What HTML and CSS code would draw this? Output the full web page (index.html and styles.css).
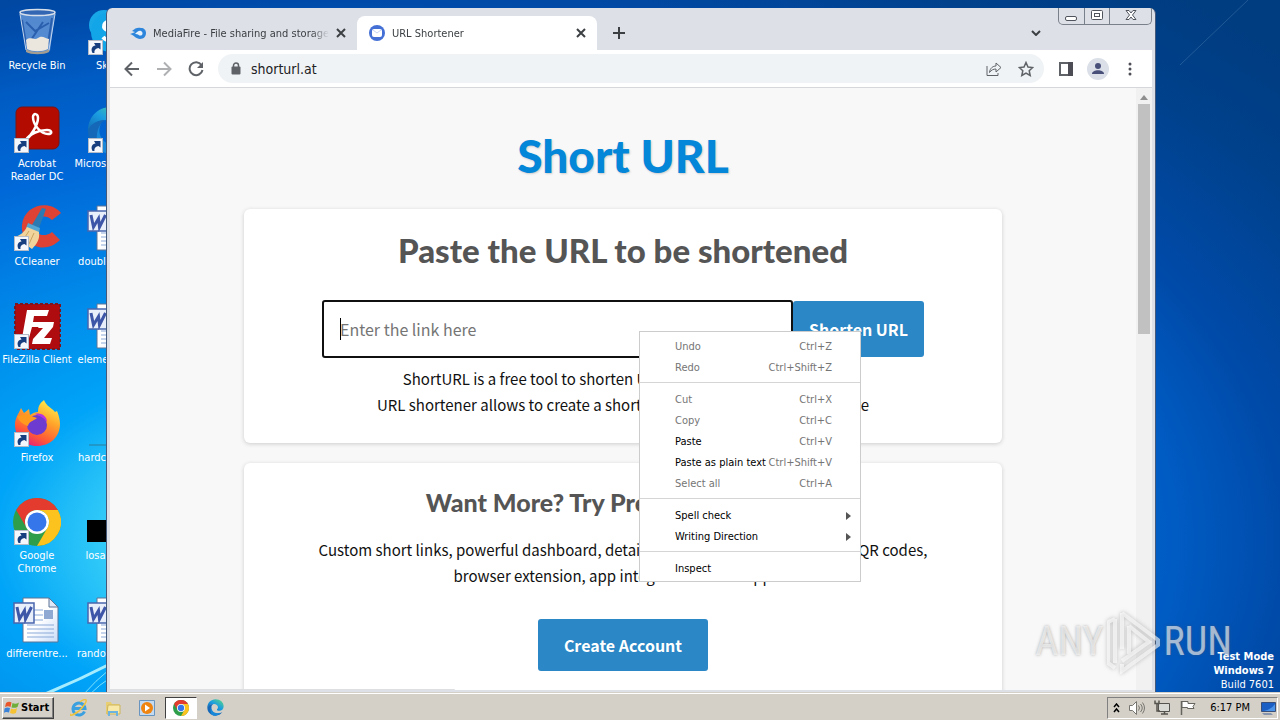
FILE: index.html
```html
<!DOCTYPE html>
<html lang="en">
<head>
  <meta charset="utf-8">
  <title>URL Shortener</title>
  <link rel="stylesheet" href="styles.css">
</head>
<body>
  <!-- shared icon shapes -->
  <svg class="defs" width="0" height="0" aria-hidden="true">
    <defs>
      <linearGradient id="paper" x1="0" y1="0" x2="1" y2="1">
        <stop offset="0.5" stop-color="#fff"/>
        <stop offset="1" stop-color="#c9dcf8"/>
      </linearGradient>
      <linearGradient id="fox" x1="0.8" y1="0" x2="0.3" y2="1">
        <stop offset="0" stop-color="#fff44f"/>
        <stop offset="0.4" stop-color="#ffa42a"/>
        <stop offset="0.75" stop-color="#ff5a36"/>
        <stop offset="1" stop-color="#e3207a"/>
      </linearGradient>
      <linearGradient id="edge" x1="0" y1="1" x2="1" y2="0">
        <stop offset="0" stop-color="#0c59a4"/>
        <stop offset="0.5" stop-color="#1b9de2"/>
        <stop offset="1" stop-color="#5fdc7b"/>
      </linearGradient>
    </defs>
    <symbol id="shortcut" viewBox="0 0 15 15">
      <rect x="0.5" y="0.5" width="14" height="14" fill="#f4f7fb" stroke="#b5bcc8"/>
      <path d="M4.500 13C2.500 9 4 6 7.500 5.500L6 3h6.500v6.500L10.500 8C8 8.500 6 10 6.500 13z" fill="#173f80"/>
    </symbol>
    <symbol id="word" viewBox="0 0 48 48">
      <path d="M10 2h26l9 9v35H10z" fill="url(#paper)" stroke="#5c7496"/>
      <path d="M36 2v9h9z" fill="#dfe8f6" stroke="#5c7496"/>
      <path d="M14 14h16M14 19h16M14 24h16M14 29h27M14 33h27M14 37h27M14 41h27" stroke="#8aa9d8"/>
      <rect x="31" y="14" width="9" height="9" fill="#8fa9d2"/>
      <rect x="1" y="7" width="20" height="20" fill="#e8eefa" stroke="#4966ad" stroke-width="1.500"/>
      <path d="M4 11l2.500 12 5-8.500 1 8.500L18.500 11" fill="none" stroke="#3e56a8" stroke-width="3"/>
    </symbol>
    <symbol id="chrome" viewBox="0 0 48 48">
      <circle cx="24" cy="24" r="24" fill="#2f9e4b"/>
      <path d="M3.200 12A24 24 0 0 1 44.800 12H24A12 12 0 0 0 13.600 30z" fill="#e33b2e"/>
      <path d="M44.800 12A24 24 0 0 1 24 48L34.400 30A12 12 0 0 0 24 12z" fill="#fcc31e"/>
      <circle cx="24" cy="24" r="12" fill="#fff"/>
      <circle cx="24" cy="24" r="9.500" fill="#3576ea"/>
    </symbol>
    <symbol id="edge-logo" viewBox="0 0 48 48">
      <path d="M24 1C38 1 47 10 47 21c0 8-6 12-12 12-4 0-7-1-7-3s3-3 3-7c0-5-5-9-11-9C10 14 2 20 1 27 0 11 11 1 24 1z" fill="url(#edge)"/>
      <path d="M1 25c2-7 9-11 17-11-5 3-7 8-6 14 2 9 11 14 20 13 4 0 8-2 11-4-4 7-11 10-19 10C11 47 1 38 1 25z" fill="#1568b8"/>
      <path d="M18 14c-6 4-7 11-4 17 4 8 14 11 24 8-4 6-12 9-19 8C8 45 6 22 18 14z" fill="#1a88d8"/>
    </symbol>
  </svg>

  <main class="desktop">
    <svg class="streaks" viewBox="0 0 1280 692" preserveAspectRatio="none" aria-hidden="true">
      <path d="M40 696Q75 682 110 664" fill="none" stroke="#a5ecff" stroke-width="3"/>
      <path d="M82 696Q96 680 110 669M88 696Q100 684 110 678" fill="none" stroke="#7fe0fd" stroke-width="1"/>
      <path d="M1180 65L1248 0" stroke="#3f77ab" stroke-opacity="0.500" stroke-width="1"/>
    </svg>

    <nav class="icons" aria-label="Desktop">
      <a class="icon" href="#">
        <svg width="48" height="48" viewBox="0 0 48 48">
          <path d="M7 4h35l-5 39c-4 3-19 3-23 0z" fill="#6f9fdc" fill-opacity="0.750"/>
          <path d="M9 12l4 24M39 10l-4 26M13 14l9 9 14-8M18 32l12-18" stroke="#2a5fae" stroke-width="2" fill="none"/>
          <path d="M13 32c5-4 8 1 12-2s7 0 11 1l-1 10c-6 3-15 3-21 0z" fill="#ece7de"/>
          <ellipse cx="24.500" cy="4.500" rx="17.500" ry="3" fill="#3467b3" stroke="#d7dfea" stroke-width="1.500"/>
          <path d="M13 41c5 4 18 4 23 0v3c-5 3-18 3-23 0z" fill="#a49e92"/>
          <path d="M7 6l6 36M42 6l-6 36" stroke="#c4d6ee" stroke-width="1"/>
        </svg>
        <span>Recycle Bin</span>
      </a>
      <a class="icon" href="#">
        <svg width="48" height="48" viewBox="0 0 48 48">
          <rect x="3" y="1" width="43" height="42" rx="6" fill="#b30b00" stroke="#7c1410"/>
          <path d="M12 35c6-5 13-16 13-23 0-5-5-5-5-1 0 8 8 17 15 17 5 0 4-4-1-4-7 0-17 3-22 11z" fill="none" stroke="#fff" stroke-width="2.500"/>
          <use href="#shortcut" x="1" y="32" width="15" height="15"/>
        </svg>
        <span>Acrobat Reader DC</span>
      </a>
      <a class="icon" href="#">
        <svg width="48" height="48" viewBox="0 0 48 48">
          <path d="M48 9C36-5 11 1 9 21c-2 19 22 31 38 15L39 28c-7 6-18 3-18-6s11-13 18-6z" fill="#dd4234"/>
          <path d="M29 4l4 1-7 19-7-3z" fill="#2b7bb2"/>
          <path d="M15 19l12 5-1 5-13-5z" fill="#54a7d2"/>
          <path d="M14 23l12 5c1 7-2 12-7 17L2 33c6-2 9-5 12-10z" fill="#f1d49b"/>
          <path d="M16 27l-6 9M21 29l-5 11" stroke="#caa35f"/>
          <use href="#shortcut" x="1" y="32" width="15" height="15"/>
        </svg>
        <span>CCleaner</span>
      </a>
      <a class="icon" href="#">
        <svg width="48" height="48" viewBox="0 0 48 48">
          <rect x="2" y="2" width="45" height="45" fill="#af0c10" stroke="#7a1620" stroke-width="2" stroke-dasharray="3 2"/>
          <path d="M14 8h22l-2 6H21l-1 6h10l-1 5H19l-3 11H9z" fill="#fff"/>
          <path d="M29 20h12l-1 5-9 11h8l-2 6H19l1-5 10-11h-5z" fill="#fff"/>
          <use href="#shortcut" x="1" y="32" width="15" height="15"/>
        </svg>
        <span>FileZilla Client</span>
      </a>
      <a class="icon" href="#">
        <svg width="48" height="48" viewBox="0 0 48 48">
          <path d="M24 46C11 46 2 37 2 25c0-7 3-10 6-17l3 5 5-4 1 6c3-2 5-3 8-3 0-6 2-9 6-12 2 6 8 8 11 12l2-1c2 5 3 9 3 13 0 13-10 22-23 22z" fill="url(#fox)"/>
          <circle cx="24" cy="25" r="10" fill="#6d3bd0"/>
          <path d="M4 16c7-1 9-3 14 0l6 2c-3 3-8 3-9 8-5-2-9-4-11-10z" fill="#ff9a1f"/>
          <path d="M22 14c7-2 12 3 12 8-3-4-7-6-12-8z" fill="#b833e1"/>
          <use href="#shortcut" x="1" y="32" width="15" height="15"/>
        </svg>
        <span>Firefox</span>
      </a>
      <a class="icon" href="#">
        <svg width="48" height="48" viewBox="0 0 48 48">
          <use href="#chrome" width="48" height="48"/>
          <use href="#shortcut" x="1" y="32" width="15" height="15"/>
        </svg>
        <span>Google Chrome</span>
      </a>
      <a class="icon" href="#">
        <svg width="48" height="48"><use href="#word"/></svg>
        <span>differentre...</span>
      </a>

      <a class="icon" href="#">
        <svg width="48" height="48" viewBox="0 0 48 48">
          <circle cx="17" cy="17" r="15" fill="#18a8e8"/>
          <circle cx="24" cy="24" r="20" fill="#12a5e8"/>
          <path d="M31 16c-5-5-15-3-14 3 1 5 13 4 14 9 0 6-11 6-15 1" fill="none" stroke="#fff" stroke-width="4"/>
          <use href="#shortcut" x="1" y="32" width="15" height="15"/>
        </svg>
        <span>Skype</span>
      </a>
      <a class="icon" href="#">
        <svg width="48" height="48" viewBox="0 0 48 48">
          <use href="#edge-logo" width="48" height="48"/>
          <use href="#shortcut" x="1" y="32" width="15" height="15"/>
        </svg>
        <span>Microsoft Edge</span>
      </a>
      <a class="icon" href="#">
        <svg width="48" height="48"><use href="#word"/></svg>
        <span>doublelink.rtf</span>
      </a>
      <a class="icon" href="#">
        <svg width="48" height="48"><use href="#word"/></svg>
        <span>elements1.rtf</span>
      </a>
      <a class="icon" href="#">
        <svg width="48" height="48" viewBox="0 0 48 48"><path d="M2 45h44" stroke="#2b7d9b"/></svg>
        <span>hardcore.png</span>
      </a>
      <a class="icon" href="#">
        <svg width="48" height="48" viewBox="0 0 48 48"><path d="M0 22h48v22H0z"/></svg>
        <span>losalto.jpg</span>
      </a>
      <a class="icon" href="#">
        <svg width="48" height="48"><use href="#word"/></svg>
        <span>randomset.rtf</span>
      </a>
    </nav>

    <p class="build"><b>Test Mode</b><b>Windows 7</b><span>Build 7601</span></p>

    <section class="window" aria-label="Chrome">
      <div class="tabs">
        <div class="tab">
          <svg width="17" height="16" viewBox="0 0 17 16">
            <path d="M1 9c2-1 4-1 5-2l-3-1c3-3 6-4 9-3 3 0 5 2 5 5s-2 6-6 6-6-4-10-5z" fill="#2e86dc"/>
            <path d="M6 9c2-2 4-4 6-3s2 4 0 4.500S9 8.500 6 9z" fill="#e6f1fb"/>
          </svg>
          <span class="tab-title">MediaFire - File sharing and storage</span>
          <button class="close" aria-label="Close tab">
            <svg width="10" height="10" viewBox="0 0 10 10"><path d="M1 1l8 8M9 1l-8 8"/></svg>
          </button>
        </div>
        <div class="tab active">
          <svg width="16" height="16" viewBox="0 0 16 16">
            <circle cx="8" cy="8" r="8" fill="#4470d6"/>
            <rect x="3" y="4" width="10" height="8" rx="2" fill="#fff"/>
            <path d="M4 5l4 3 4-3" fill="none" stroke="#c5d4f4"/>
          </svg>
          <span class="tab-title">URL Shortener</span>
          <button class="close" aria-label="Close tab">
            <svg width="10" height="10" viewBox="0 0 10 10"><path d="M1 1l8 8M9 1l-8 8"/></svg>
          </button>
        </div>
        <button class="new-tab" aria-label="New tab">
          <svg width="12" height="12" viewBox="0 0 12 12"><path d="M6 0v12M0 6h12"/></svg>
        </button>
        <button class="tab-search" aria-label="Search tabs">
          <svg width="10" height="6" viewBox="0 0 10 6"><path d="M1 1l4 4 4-4"/></svg>
        </button>
      </div>
      <div class="controls">
        <button aria-label="Minimize"><svg width="13" height="12" viewBox="0 0 13 12"><rect x="0.500" y="7.500" width="11" height="4" rx="1.500"/></svg></button>
        <button aria-label="Restore"><svg width="13" height="12" viewBox="0 0 13 12"><rect x="0.500" y="1.500" width="11" height="9" rx="1"/><rect x="3.500" y="4.500" width="5" height="3"/></svg></button>
        <button class="wide" aria-label="Close"><svg width="12" height="12" viewBox="0 0 12 12"><path d="M1 1.500h3l2 2.500 2-2.500h3L7.500 6l3.500 4.500H8L6 8l-2 2.500H1L4.500 6z"/></svg></button>
      </div>

      <div class="toolbar">
        <button class="tool" aria-label="Back">
          <svg width="16" height="16" viewBox="0 0 16 16"><path d="M15 8H2M8 1.500L1.500 8 8 14.500"/></svg>
        </button>
        <button class="tool" aria-label="Forward" disabled>
          <svg width="16" height="16" viewBox="0 0 16 16"><path d="M1 8h13M8 1.500L14.500 8 8 14.500"/></svg>
        </button>
        <button class="tool" aria-label="Reload">
          <svg width="16" height="16" viewBox="0 0 16 16"><path d="M13.500 4A6.500 6.500 0 1 0 14.500 9"/><path d="M15 1v6H9z" fill="#5f6368" stroke="none"/></svg>
        </button>
        <div class="omnibox">
          <svg width="10" height="13" viewBox="0 0 10 13"><rect x="0.500" y="4.500" width="9" height="8" rx="1" fill="#5f6368"/><path d="M2.500 5V3.500a2.500 2.500 0 0 1 5 0V5" fill="none" stroke="#5f6368" stroke-width="1.500"/></svg>
          <input type="text" value="shorturl.at" aria-label="Address">
          <button class="tool" aria-label="Share">
            <svg class="thin" width="16" height="16" viewBox="0 0 16 16"><path d="M1 5v9.500h11V12M3.500 11.500C4 7 7 5 10 5V2l5 4.500-5 4.500V8C7.500 8 5 9 3.500 11.500z"/></svg>
          </button>
          <button class="tool" aria-label="Bookmark">
            <svg class="star" width="16" height="16" viewBox="0 0 16 16"><path d="M8 1.500l2 4.500 4.700.500-3.500 3.200 1 4.800L8 12l-4.200 2.500 1-4.800L1.300 6.500 6 6z"/></svg>
          </button>
        </div>
        <button class="tool" aria-label="Side panel">
          <svg width="14" height="14" viewBox="0 0 14 14"><path d="M1 1h12v12H1z"/><path d="M9 0h5v14H9z" fill="#4c4d55" stroke="none"/></svg>
        </button>
        <button class="tool" aria-label="Profile">
          <svg width="22" height="22" viewBox="0 0 22 22"><g stroke="none"><circle cx="11" cy="11" r="11" fill="#dadfe8"/><circle cx="11" cy="8" r="3" fill="#48507a"/><path d="M5 16c0-5 12-5 12 0z" fill="#48507a"/></g></svg>
        </button>
        <button class="tool" aria-label="Menu">
          <svg width="4" height="14" viewBox="0 0 4 14"><g fill="#4c4d55" stroke="none"><circle cx="2" cy="2" r="1.500"/><circle cx="2" cy="7" r="1.500"/><circle cx="2" cy="12" r="1.500"/></g></svg>
        </button>
      </div>

      <div class="view">
        <div class="page">
          <h1>Short URL</h1>
          <form class="card">
            <h2>Paste the URL to be shortened</h2>
            <div class="field">
              <span class="link-box"><input type="text" aria-label="Link" placeholder="Enter the link here"></span>
              <button class="primary" type="button">Shorten URL</button>
            </div>
            <p>ShortURL is a free tool to shorten URLs and generate short links<br>
              URL shortener allows to create a shortened link making it easy to share</p>
          </form>
          <section class="card premium">
            <h3>Want More? Try Premium Features!</h3>
            <p>Custom short links, powerful dashboard, detailed analytics, API, UTM builder, QR codes,
              browser extension, app integrations and support</p>
            <a class="primary" href="#">Create Account</a>
          </section>
        </div>
        <div class="scrollbar">
          <svg width="8" height="5" viewBox="0 0 8 5"><path d="M4 0l4 5H0z" fill="#8f8f8f"/></svg>
          <div class="thumb"></div>
        </div>
        <div class="status"></div>
      </div>
    </section>

    <div class="menu" role="menu">
      <button role="menuitem" disabled>Undo<kbd>Ctrl+Z</kbd></button>
      <button role="menuitem" disabled>Redo<kbd>Ctrl+Shift+Z</kbd></button>
      <hr>
      <button role="menuitem" disabled>Cut<kbd>Ctrl+X</kbd></button>
      <button role="menuitem" disabled>Copy<kbd>Ctrl+C</kbd></button>
      <button role="menuitem">Paste<kbd>Ctrl+V</kbd></button>
      <button role="menuitem">Paste as plain text<kbd>Ctrl+Shift+V</kbd></button>
      <button role="menuitem" disabled>Select all<kbd>Ctrl+A</kbd></button>
      <hr>
      <button class="sub" role="menuitem">Spell check<svg width="5" height="8" viewBox="0 0 5 8"><path d="M0 0l5 4-5 4z"/></svg></button>
      <button class="sub" role="menuitem">Writing Direction<svg width="5" height="8" viewBox="0 0 5 8"><path d="M0 0l5 4-5 4z"/></svg></button>
      <hr>
      <button role="menuitem">Inspect</button>
    </div>

    <div class="watermark">
      <span>ANY</span>
      <svg width="54" height="64" viewBox="0 0 54 64" fill="none">
        <path d="M8 9v44M1 11v42l7 5M8 9L1 12" />
        <path d="M15 3l36 27v5L15 61v-7M15 3v36M22 16l20 16-27 19M22 16v28"/>
      </svg>
      <span>RUN</span>
    </div>
  </main>

  <footer class="taskbar">
    <button class="start">
      <svg width="16" height="16" viewBox="0 0 16 16">
        <path d="M2 3c2-1.500 4-1.500 5.500-.500L6.500 7C5 6 3 6 1 7z" fill="#e8562a"/>
        <path d="M8.500 3c2 1 4 1 6.500-.500L13.500 7c-2 1-4 1-6 .500z" fill="#6fae3a"/>
        <path d="M.500 8.500c2-1.500 4-1 5.500-.500L5 12.500c-2-1-4-.500-5 .500z" fill="#3a83d8"/>
        <path d="M7 8.500c2 1 4 1 6-.500L12 13c-2 1-4 1-6 0z" fill="#f6c231"/>
      </svg>
      Start
    </button>
    <nav class="pinned" aria-label="Pinned">
      <a href="#" aria-label="Internet Explorer">
        <svg width="18" height="18" viewBox="0 0 18 18"><path d="M14.500 12.500A6 6 0 1 1 15 9.500H4" fill="none" stroke="#3aa0e0" stroke-width="3"/><path d="M1 15C-1 17 4 17 9 12s8-10 7-11-4 0-6 2" fill="none" stroke="#efc33c" stroke-width="1.500"/></svg>
      </a>
      <a href="#" aria-label="Explorer">
        <svg width="18" height="18" viewBox="0 0 18 18"><path d="M2 3h5l1 2h7v10H2z" fill="#e9cf74"/><path d="M4 6h12v9H3z" fill="#f8e9a8" stroke="#cdb35a"/><path d="M4 17v-5h10v5h-2v-3H6v3z" fill="#6db3e0"/></svg>
      </a>
      <a href="#" aria-label="Media Player">
        <svg width="18" height="18" viewBox="0 0 18 18"><path d="M1.500 1.500h15v15h-15z" fill="#c3daf0" stroke="#6795c0"/><circle cx="9" cy="9" r="6" fill="#f08410"/><path d="M7 5.500L12 9l-5 3.500z" fill="#fff"/></svg>
      </a>
      <a class="current" href="#" aria-label="Chrome">
        <svg width="16" height="16"><use href="#chrome"/></svg>
      </a>
      <a href="#" aria-label="Edge">
        <svg width="17" height="17"><use href="#edge-logo"/></svg>
      </a>
    </nav>
    <div class="tray">
      <svg width="7" height="10" viewBox="0 0 7 10" fill="none" stroke="#000" stroke-width="1.500"><path d="M1 4l2.500-3L6 4M1 9l2.500-3L6 9"/></svg>
      <svg width="16" height="14" viewBox="0 0 16 14" fill="none" stroke="#77756f"><path d="M.500 4.500h3l4-4v13l-4-4h-3z" fill="#fff"/><path d="M9.500 4.500q2 2.500 0 5M11.500 3q3.500 4 0 8M13.500 1.500q4 5.500 0 11"/></svg>
      <svg width="17" height="15" viewBox="0 0 17 15" fill="none" stroke="#55534e"><path d="M4.500 3.500h11v8h-11z" fill="#d9d9d5"/><path d="M7 14h7M10.500 12v2M1 .500v3h4v-3M3 4v7h3" stroke-width="1.500"/></svg>
      <svg width="17" height="15" viewBox="0 0 17 15" stroke="#66645f"><path d="M1.500 1v14" stroke-width="1.500"/><path d="M2 1.500h6v2h7l-2 3 1 2H7.500v-1H2z" fill="#fff"/></svg>
      <time>6:17 PM</time>
      <svg width="15" height="14" viewBox="0 0 15 14"><path d="M.500 1.500h14v9H.500z" fill="#1c5fc4" stroke="#3a4f78"/><path d="M1 10q8 0 13-7v7z" fill="#4b94e8"/><path d="M1 12h9l2 2H3z" fill="#8794ad"/></svg>
    </div>
  </footer>
</body>
</html>
```

FILE: styles.css
```css
* {
  box-sizing: border-box;
}

body {
  display: flex;
  flex-direction: column;
  height: 100vh;
  margin: 0;
  overflow: hidden;
  font-family: "DejaVu Sans Condensed", "DejaVu Sans", sans-serif;
  font-size: 11px;
  color: #000;
}

button,
input {
  padding: 0;
  border: none;
  background: none;
  font: inherit;
  color: inherit;
}

a {
  color: inherit;
  text-decoration: none;
}

svg {
  display: block;
  flex: none;
}

.defs {
  position: absolute;
}

/* desktop */
.desktop {
  position: relative;
  flex: 1;
  min-height: 0;
  overflow: hidden;
  background: radial-gradient(ellipse 1000px 560px at 320px 540px, #5be4ff 0%, #38cff8 20%, #00a4f8 33%, #0096f0 42%, #0068d8 70%, #005cc4 85%, #004aa8 97%, #00418c 115%, #003c80 130%);
}

.streaks {
  position: absolute;
  width: 100%;
  height: 100%;
}

.icons {
  position: relative;
  display: grid;
  grid-auto-flow: column;
  grid-template-rows: repeat(7, 98px);
  grid-auto-columns: 74px;
  padding-top: 8px;
}

.icon {
  display: flex;
  flex-direction: column;
  align-items: center;
  gap: 3px;
  line-height: 13px;
  text-align: center;
  color: #fff;
}

.icon span {
  max-width: 74px;
}

.build {
  position: absolute;
  right: 6px;
  bottom: 0;
  display: flex;
  flex-direction: column;
  margin: 0;
  line-height: 14px;
  text-align: right;
  color: #fff;
}

/* browser window */
.window {
  position: absolute;
  top: 8px;
  right: 124px;
  bottom: 0;
  left: 106px;
  display: flex;
  flex-direction: column;
  border: 1px solid #45597a;
  border-width: 0 1px;
  border-radius: 6px 6px 0 0;
  padding: 0 3px 2px;
  background: #dde0e7;
}

.tabs {
  display: flex;
  align-items: flex-end;
  height: 42px;
  padding-left: 7px;
}

.tab {
  display: flex;
  align-items: center;
  gap: 7px;
  width: 240px;
  height: 34px;
  padding: 0 11px 0 12px;
  color: #3c4043;
}

.tab.active {
  border-radius: 8px 8px 0 0;
  background: #fff;
}

.tab-title {
  flex: 1;
  overflow: hidden;
  white-space: nowrap;
  mask-image: linear-gradient(to right, #000 90%, transparent);
}

.close svg,
.new-tab svg,
.tab-search svg {
  fill: none;
  stroke: #3c4043;
  stroke-width: 2;
}

.new-tab {
  padding: 11px 16px;
}

.tab-search {
  margin-left: auto;
  padding: 14px 111px;
}

.controls {
  position: absolute;
  top: 0;
  right: 3px;
  display: flex;
  border: 1px solid #7a8089;
  border-top: none;
  border-radius: 0 0 5px 5px;
}

.controls button {
  display: flex;
  justify-content: center;
  width: 25px;
  height: 16px;
  padding-top: 1px;
}

.controls button + button {
  border-left: 1px solid #7a8089;
}

.controls .wide {
  width: 42px;
}

.controls svg {
  fill: #fff;
  stroke: #50545c;
}

.toolbar {
  display: flex;
  align-items: center;
  height: 38px;
  border-bottom: 1px solid #d5d7da;
  padding: 0 6px;
  background: #fff;
}

.tool {
  display: flex;
  align-items: center;
  justify-content: center;
  width: 32px;
  height: 28px;
}

.tool svg {
  fill: none;
  stroke: #5f6368;
  stroke-width: 2;
}

.tool:disabled {
  opacity: 0.5;
}

.tool .thin {
  stroke-width: 1;
}

.tool .star {
  stroke-width: 1.5;
}

.omnibox {
  display: flex;
  flex: 1;
  align-items: center;
  gap: 10px;
  height: 29px;
  margin: 0 6px;
  border-radius: 15px;
  padding: 0 2px 0 13px;
  background: #f0f3f5;
}

.omnibox input {
  flex: 1;
  min-width: 0;
  font-size: 14px;
  color: #202124;
}

.omnibox .tool + .tool {
  margin-left: -10px;
}

.view {
  position: relative;
  display: flex;
  flex: 1;
  min-height: 0;
  overflow: hidden;
  background: #f8f8f8;
}

.scrollbar {
  display: flex;
  flex-direction: column;
  align-items: center;
  gap: 4px;
  width: 16px;
  padding: 7px 2px;
  background: #f1f1f1;
}

.thumb {
  width: 100%;
  height: 230px;
  background: #c1c1c1;
}

.status {
  position: absolute;
  bottom: 0;
  left: 0;
  width: 345px;
  height: 1px;
  border-radius: 0 3px 0 0;
  background: #dddfe1;
}

/* site */
.page {
  flex: 1;
  font-family: "Noto Sans CJK SC", sans-serif;
  font-size: 15px;
  line-height: 26px;
  text-align: center;
  color: #111;
}

h1,
h2,
h3 {
  margin: 0;
  font-family: Lato, sans-serif;
  font-weight: 900;
  color: #555;
}

h1 {
  padding: 38px 0 23px;
  font-size: 46px;
  line-height: 60px;
  color: #0486d9;
  text-shadow: 1px 1px 2px #ccc;
}

h2 {
  font-size: 33px;
  line-height: 48px;
}

h3 {
  font-size: 25px;
  line-height: 38px;
}

.card {
  max-width: 758px;
  margin: 0 auto 20px;
  border-radius: 6px;
  padding: 17px 70px 25px;
  background: #fff;
  box-shadow: 0 1px 4px #ccc;
}

.field {
  display: flex;
  align-items: center;
  margin: 26px 8px 8px;
}

.link-box {
  flex: 1;
  border: 2px solid #101010;
  border-radius: 3px;
  padding: 14px 16px;
}

/* the thin bar on the left is the text cursor */
.link-box input {
  display: block;
  width: 100%;
  height: 26px;
  background: linear-gradient(#000, #000) left center / 1px 22px no-repeat;
  font-size: 16px;
  outline: none;
}

.link-box input::placeholder {
  color: #757575;
}

.primary {
  border-radius: 3px;
  padding: 15px 16px;
  background: #2b87c5;
  font-size: 16px;
  font-weight: bold;
  color: #fff;
}

.card p {
  margin: 0;
}

.premium {
  padding-top: 20px;
}

.premium p {
  margin: 16px 0 30px;
}

.premium .primary {
  display: inline-block;
  padding: 13px 26px;
}

/* context menu */
.menu {
  position: absolute;
  top: 331px;
  left: 639px;
  display: flex;
  flex-direction: column;
  width: 222px;
  border: 1px solid #ccc;
  padding: 4px 0 2px;
  background: #fff;
}

.menu button {
  display: flex;
  align-items: center;
  justify-content: space-between;
  height: 21px;
  padding: 0 28px 0 35px;
}

.menu button:disabled,
.menu kbd {
  font: inherit;
  color: #757575;
}

.menu .sub {
  padding-right: 9px;
}

.menu .sub svg {
  fill: #555;
}

.menu hr {
  width: 100%;
  margin: 4px 0 6px;
  border: none;
  border-top: 1px solid #d5d5d5;
}

.watermark {
  position: absolute;
  right: 48px;
  bottom: 18px;
  display: flex;
  align-items: center;
  gap: 3px;
  font-family: "Roboto Condensed", "Open Sans Condensed", "Noto Sans CJK SC", sans-serif;
  font-size: 40px;
  font-weight: 400;
  line-height: 64px;
  color: rgba(255, 255, 255, 0.6);
  text-shadow: 0 0 3px rgba(90, 90, 90, 0.5);
  pointer-events: none;
}

.watermark svg {
  stroke: rgba(255, 255, 255, 0.6);
  stroke-width: 4;
  filter: drop-shadow(0 0 2px rgba(90, 90, 90, 0.6));
}

/* taskbar */
.taskbar {
  display: flex;
  align-items: center;
  height: 28px;
  border-top: 1px solid #d4d0c8;
  padding: 2px 2px 0;
  background: #d4d0c8;
  box-shadow: inset 0 1px #fff;
}

.start {
  display: flex;
  align-items: center;
  gap: 1px;
  width: 52px;
  height: 22px;
  border: 1px solid;
  border-color: #fff #404040 #404040 #fff;
  padding-left: 1px;
  font-weight: bold;
  box-shadow: inset -1px -1px #808080;
}

.pinned {
  display: flex;
  gap: 2px;
  margin-left: 9px;
}

.pinned a {
  display: flex;
  align-items: center;
  justify-content: center;
  width: 32px;
  height: 22px;
}

.pinned .current {
  border: 1px solid;
  border-color: #404040 #fff #fff #404040;
  background: #fff;
}

.tray {
  display: flex;
  align-items: center;
  gap: 9px;
  height: 22px;
  margin-left: auto;
  border: 1px solid;
  border-color: #808080 #fff #fff #808080;
  padding: 0 1px 0 5px;
}

.tray time {
  margin: 0 2px 0 4px;
}
```
